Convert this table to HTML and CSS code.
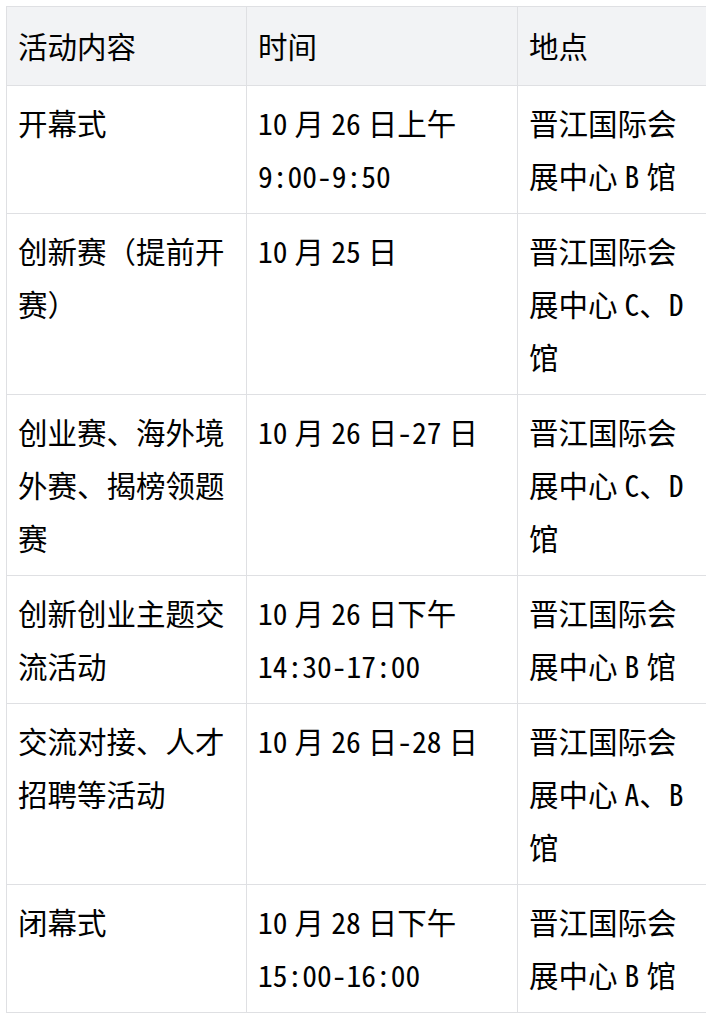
FILE: index.html
```html
<!DOCTYPE html>
<html lang="zh-CN">
<head>
<meta charset="utf-8">
<link rel="stylesheet" href="styles.css">
</head>
<body>
<table class="schedule">
  <colgroup>
    <col class="c1">
    <col class="c2">
    <col class="c3">
  </colgroup>
  <thead>
    <tr><th>活动内容</th><th>时间</th><th>地点</th></tr>
  </thead>
  <tbody>
    <tr><td>开幕式</td><td>10 月 26 日上午 9:00-9:50</td><td>晋江国际会展中心 B 馆</td></tr>
    <tr><td>创新赛（提前开赛）</td><td>10 月 25 日</td><td>晋江国际会展中心 C、D 馆</td></tr>
    <tr><td>创业赛、海外境外赛、揭榜领题赛</td><td>10 月 26 日-27 日</td><td>晋江国际会展中心 C、D 馆</td></tr>
    <tr><td>创新创业主题交流活动</td><td>10 月 26 日下午 14:30-17:00</td><td>晋江国际会展中心 B 馆</td></tr>
    <tr><td>交流对接、人才招聘等活动</td><td>10 月 26 日-28 日</td><td>晋江国际会展中心 A、B 馆</td></tr>
    <tr><td>闭幕式</td><td>10 月 28 日下午 15:00-16:00</td><td>晋江国际会展中心 B 馆</td></tr>
  </tbody>
</table>
</body>
</html>
```

FILE: styles.css
```css
html, body {
  background: #ffffff;
}
body {
  margin: 6px;
  font-family: "Noto Sans Mono CJK SC", "Noto Sans CJK SC", "Liberation Serif", serif;
  font-size: 29.5px;
  line-height: 53px;
  color: #000000;
}
.schedule {
  border-collapse: collapse;
  table-layout: fixed;
  width: 701px;
}
.c1 { width: 240px; }
.c2 { width: 271px; }
.c3 { width: 190px; }
.schedule th,
.schedule td {
  border: 1px solid #dfe0e3;
  text-align: left;
  vertical-align: top;
  font-weight: normal;
  padding: 10px 11px 11px;
}
.schedule th {
  background: #f2f3f5;
  padding: 12px 11px 13px;
}
.schedule td {
  word-spacing: -0.26em;
}
```
